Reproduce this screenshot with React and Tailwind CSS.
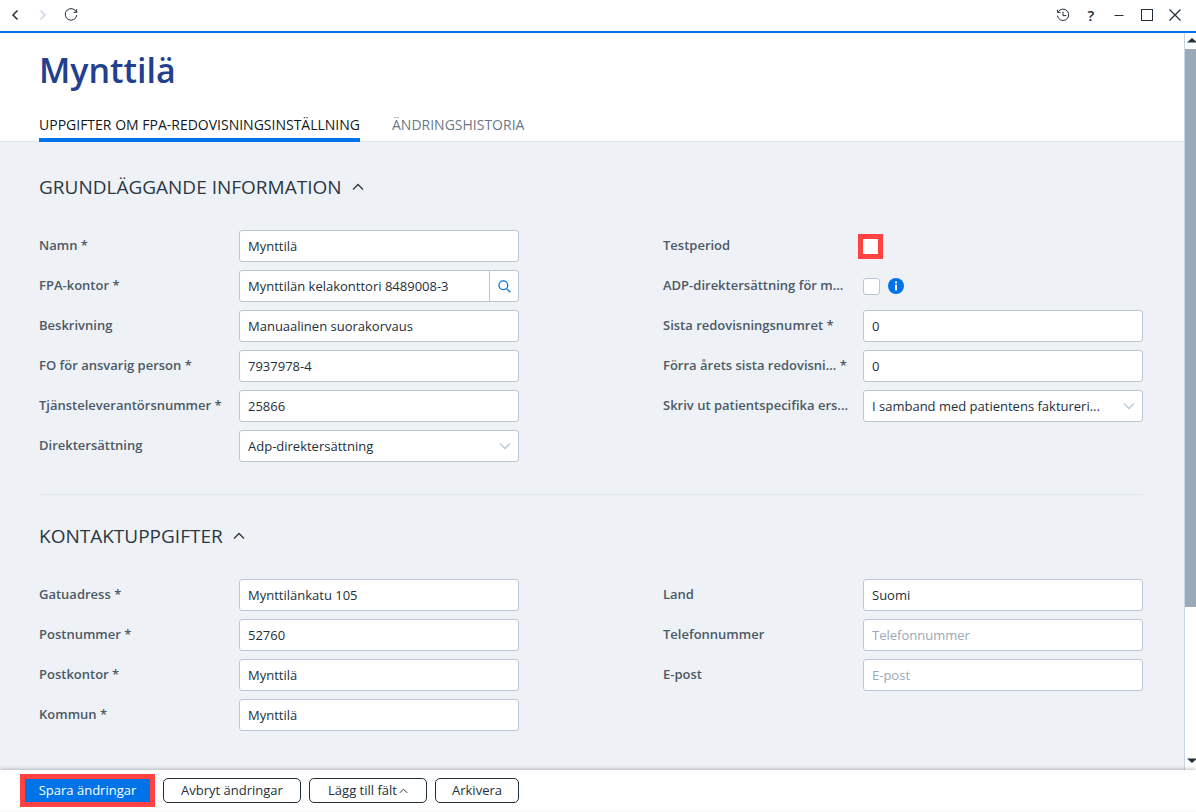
import React, { useState } from "react";

const inputClass =
  "h-8 w-full min-w-0 rounded-[3px] border border-[#b9c6d8] bg-white px-2 text-[13px] text-[#232f3b] placeholder:text-[#9aa8b8] outline-none focus:border-[#0073e9]";

function Chevron({ className, up }) {
  return (
    <svg viewBox="0 0 12 8" className={className} fill="none" stroke="currentColor" strokeWidth="1.3">
      <path d={up ? "M1 6.5 L6 1.5 L11 6.5" : "M1 1.5 L6 6.5 L11 1.5"} />
    </svg>
  );
}

function Row({ id, label, required, children }) {
  return (
    <div className="flex h-8 items-center">
      <label htmlFor={id} className="w-[200px] shrink-0 whitespace-nowrap font-semibold text-[#4c5966] text-[13px]">
        {label}
        {required && " *"}
      </label>
      <div className="flex flex-1 items-center min-w-0">{children}</div>
    </div>
  );
}

function TextField({ id, label, required, value = "", placeholder }) {
  const [text, setText] = useState(value);
  return (
    <Row id={id} label={label} required={required}>
      <input
        id={id}
        type="text"
        value={text}
        placeholder={placeholder}
        onChange={(e) => setText(e.target.value)}
        className={inputClass}
      />
    </Row>
  );
}

function SearchField({ id, label, required, value }) {
  const [text, setText] = useState(value);
  return (
    <Row id={id} label={label} required={required}>
      <div className="flex w-full h-8 overflow-hidden rounded-[3px] border border-[#b9c6d8] bg-white">
        <input
          id={id}
          type="text"
          value={text}
          onChange={(e) => setText(e.target.value)}
          className="flex-1 min-w-0 px-2 pt-px text-[13px] text-[#232f3b] outline-none"
        />
        <button type="button" aria-label="Sök" className="flex w-[29px] items-center justify-center border-l border-[#b9c6d8] text-[#0073e9]">
          <svg viewBox="0 0 13 13" className="h-[13px] w-[13px]" fill="none" stroke="currentColor" strokeWidth="1.3">
            <circle cx="5.3" cy="5.3" r="4.4" />
            <path d="M8.6 8.6 L12.3 12.3" />
          </svg>
        </button>
      </div>
    </Row>
  );
}

function SelectField({ id, label, option }) {
  return (
    <Row id={id} label={label}>
      <div className="relative w-full">
        <select id={id} className={`${inputClass} appearance-none pt-px pr-8`}>
          <option>{option}</option>
        </select>
        <Chevron className="pointer-events-none absolute top-3 right-2 h-2 w-3 text-[#b9c6d8]" />
      </div>
    </Row>
  );
}

function Section({ title, children }) {
  const [open, setOpen] = useState(true);
  return (
    <section>
      <h2 className="text-[19px] leading-6 text-[#2b3743]">
        <button type="button" onClick={() => setOpen(!open)} className="flex items-center gap-2.5">
          {title}
          <Chevron up={open} className="h-2 w-3" />
        </button>
      </h2>
      {open && <div className="mt-[31px] grid grid-cols-2 gap-x-36">{children}</div>}
    </section>
  );
}

function Header() {
  const iconButton = "flex h-6 w-7 items-center justify-center";
  return (
    <header className="flex h-[33px] shrink-0 items-center justify-between border-b-2 border-[#0073e9] bg-white pr-[7px] pb-px pl-px text-[#232f3b]">
      <div className="flex">
        <button type="button" aria-label="Bakåt" className={iconButton}>
          <svg viewBox="0 0 12 12" className="h-3 w-3" fill="none" stroke="currentColor" strokeWidth="1.5">
            <path d="M8.5 1.5 L4 6 L8.5 10.5" />
          </svg>
        </button>
        <button type="button" aria-label="Framåt" disabled className={`${iconButton} text-[#ccd6e2]`}>
          <svg viewBox="0 0 12 12" className="h-3 w-3" fill="none" stroke="currentColor" strokeWidth="1.5">
            <path d="M3.5 1.5 L8 6 L3.5 10.5" />
          </svg>
        </button>
        <button type="button" aria-label="Uppdatera" className={iconButton}>
          <svg viewBox="0 0 14 14" className="h-3.5 w-3.5" fill="none" stroke="currentColor" strokeWidth="1">
            <path d="M12.4 4.2 A5.8 5.8 0 1 0 12.8 7" />
            <path d="M12.7 1.2 V4.4 H9.6" />
          </svg>
        </button>
      </div>
      <div className="flex">
        <button type="button" aria-label="Historik" className={iconButton}>
          <svg viewBox="0 0 14 14" className="h-3.5 w-3.5" fill="none" stroke="currentColor" strokeWidth="1">
            <path d="M2.2 3.8 A5.7 5.7 0 1 1 1.4 7.6" />
            <path d="M1.4 1.6 V4.4 H4.6" />
            <path d="M7 3.6 V7.6 H10.4" />
          </svg>
        </button>
        <button type="button" aria-label="Hjälp" className={`${iconButton} text-[15px] font-semibold`}>
          ?
        </button>
        <button type="button" aria-label="Minimera" className={iconButton}>
          <svg viewBox="0 0 12 12" className="h-3 w-3" fill="none" stroke="currentColor">
            <path d="M1.5 6.5 H10.5" />
          </svg>
        </button>
        <button type="button" aria-label="Maximera" className={iconButton}>
          <svg viewBox="0 0 12 12" className="h-3 w-3" fill="none" stroke="currentColor">
            <rect x="0.5" y="0.5" width="11" height="11" />
          </svg>
        </button>
        <button type="button" aria-label="Stäng" className={iconButton}>
          <svg viewBox="0 0 12 12" className="h-3 w-3" fill="none" stroke="currentColor" strokeWidth="1.2">
            <path d="M0.5 0.5 L11.5 11.5 M11.5 0.5 L0.5 11.5" />
          </svg>
        </button>
      </div>
    </header>
  );
}

function ScrollBar() {
  return (
    <div className="flex w-3 shrink-0 flex-col border-l border-[#c9d6e4] bg-white text-[#232f3b]">
      <svg viewBox="0 0 11 16" className="h-4 w-full shrink-0" fill="currentColor">
        <path d="M2 9.5 L7 5 L12 9.5 Z" />
      </svg>
      <div className="flex-[558] bg-[#9aa9b8]"></div>
      <div className="flex-[147]"></div>
      <svg viewBox="0 0 11 16" className="h-4 w-full shrink-0" fill="currentColor">
        <path d="M2 4.5 L7 9 L12 4.5 Z" />
      </svg>
    </div>
  );
}

function Footer() {
  const button =
    "flex h-[25px] items-center justify-center whitespace-nowrap rounded-[5px] border border-[#232f3b] bg-white text-[13px] text-[#232f3b]";
  return (
    <footer className="relative z-10 flex h-[42px] shrink-0 items-center gap-2 border-b-2 border-[#fafafa] bg-white pt-px pl-5 shadow-[0_-1px_4px_rgba(0,0,0,0.25)]">
      <button type="submit" className="h-[33px] w-[135px] whitespace-nowrap border-[5px] border-[#ff4242] bg-[#0073e9] text-[13px] text-white">
        Spara ändringar
      </button>
      <button type="button" className={`${button} w-[138px]`}>Avbryt ändringar</button>
      <button type="button" className={`${button} w-[118px] gap-0.5`}>
        Lägg till fält
        <Chevron up className="h-[6px] w-[9px]" />
      </button>
      <button type="button" className={`${button} w-[84px]`}>Arkivera</button>
    </footer>
  );
}

function App() {
  return (
    <form
      onSubmit={(e) => e.preventDefault()}
      className="flex h-screen flex-col bg-white font-['Segoe_UI','Open_Sans',sans-serif]"
    >
      <Header />
      <div className="flex min-h-0 flex-1">
        <main className="flex-1 min-w-0 overflow-hidden bg-[#eef2f7]">
          <div className="border-b border-[#dfe4ea] bg-white pt-3 pl-[39px]">
            <h1 className="font-semibold text-[#23408f] text-[34px] leading-[50px]">Mynttilä</h1>
            <nav className="mt-[13px] flex gap-8 text-[14px] leading-[18px]">
              <a href="#uppgifter" className="-mb-px border-b-4 border-[#0073e9] pt-2 pb-1 font-medium text-[#111820]">
                UPPGIFTER OM FPA-REDOVISNINGSINSTÄLLNING
              </a>
              <a href="#historia" className="pt-2 font-medium text-[#6b7885]">
                ÄNDRINGSHISTORIA
              </a>
            </nav>
          </div>

          <div className="pt-[33px] pr-[41px] pl-[39px]">
            <Section title="GRUNDLÄGGANDE INFORMATION">
              <div className="flex flex-col gap-2">
                <TextField id="namn" label="Namn" required value="Mynttilä" />
                <SearchField id="kontor" label="FPA-kontor" required value="Mynttilän kelakonttori 8489008-3" />
                <TextField id="beskrivning" label="Beskrivning" value="Manuaalinen suorakorvaus" />
                <TextField id="fo" label="FO för ansvarig person" required value="7937978-4" />
                <TextField id="leverantor" label="Tjänsteleverantörsnummer" required value="25866" />
                <SelectField id="direkt" label="Direktersättning" option="Adp-direktersättning" />
              </div>
              <div className="flex flex-col gap-2">
                <Row id="testperiod" label="Testperiod">
                  <input
                    id="testperiod"
                    type="checkbox"
                    className="size-[15px] appearance-none bg-white outline-[5px] outline-solid outline-[#ff4242] checked:bg-[#0073e9]"
                  />
                </Row>
                <Row id="adp" label="ADP-direktersättning för m...">
                  <input
                    id="adp"
                    type="checkbox"
                    className="size-[17px] appearance-none rounded-[3px] border border-[#b9c6d8] bg-white checked:bg-[#0073e9]"
                  />
                  <svg viewBox="0 0 16 16" className="ml-2 size-4">
                    <circle cx="8" cy="8" r="8" fill="#0073e9" />
                    <path d="M7 3.5 H9 V5.3 H7 Z M7 6.5 H9 V12.5 H7 Z" fill="#fff" />
                  </svg>
                </Row>
                <TextField id="sista" label="Sista redovisningsnumret" required value="0" />
                <TextField id="forra" label="Förra årets sista redovisni..." required value="0" />
                <SelectField id="skriv" label="Skriv ut patientspecifika ers..." option="I samband med patientens faktureri..." />
              </div>
            </Section>

            <hr className="mt-8 mb-[29px] border-[#dfe5ec]" />

            <Section title="KONTAKTUPPGIFTER">
              <div className="flex flex-col gap-2">
                <TextField id="gata" label="Gatuadress" required value="Mynttilänkatu 105" />
                <TextField id="postnummer" label="Postnummer" required value="52760" />
                <TextField id="postkontor" label="Postkontor" required value="Mynttilä" />
                <TextField id="kommun" label="Kommun" required value="Mynttilä" />
              </div>
              <div className="flex flex-col gap-2">
                <TextField id="land" label="Land" value="Suomi" />
                <TextField id="telefon" label="Telefonnummer" placeholder="Telefonnummer" />
                <TextField id="epost" label="E-post" placeholder="E-post" />
              </div>
            </Section>
          </div>
        </main>
        <ScrollBar />
      </div>
      <Footer />
    </form>
  );
}

export default App;
